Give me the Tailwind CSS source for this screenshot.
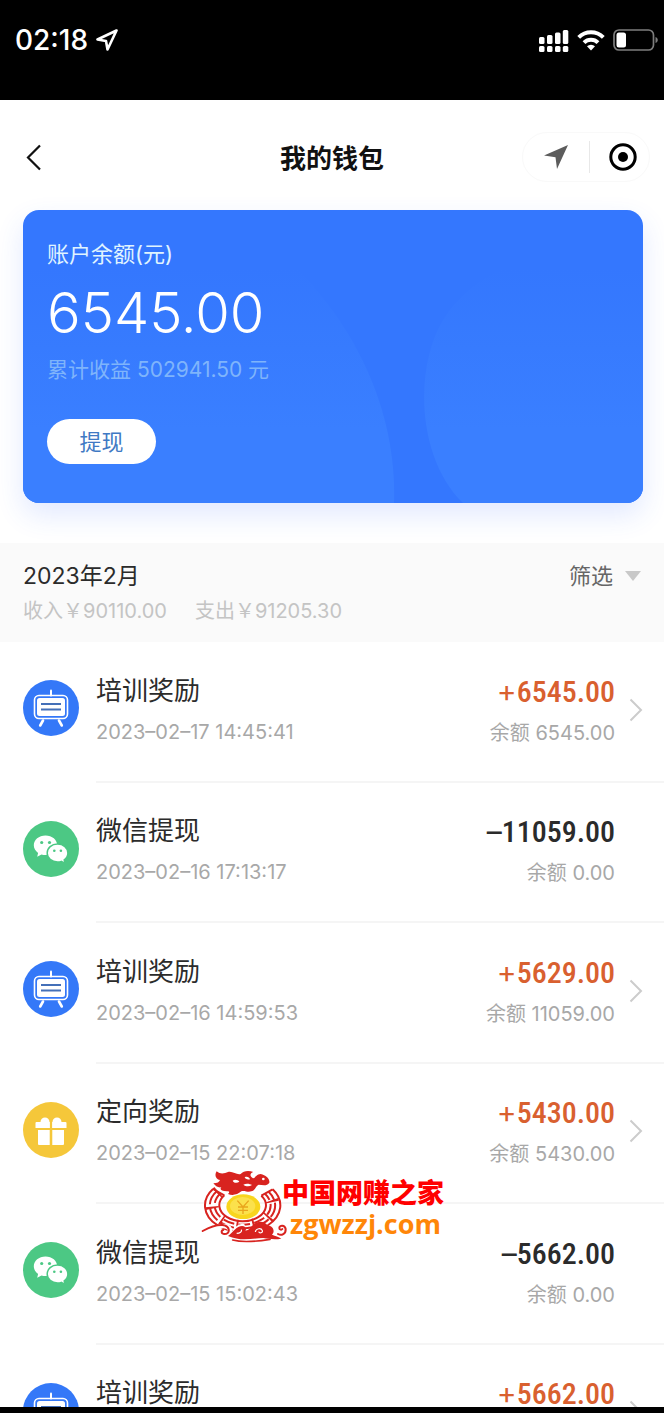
<!DOCTYPE html>
<html lang="zh-CN">
<head>
<meta charset="utf-8">
<meta name="viewport" content="width=device-width, initial-scale=1">
<title>我的钱包</title>
<script src="https://cdn.jsdelivr.net/npm/@tailwindcss/browser@4"></script>
</head>
<body class="bg-black">
<svg class="hidden" aria-hidden="true">
  <symbol id="board" viewBox="0 0 56 56">
    <circle cx="28" cy="28" r="28" fill="#3478f8"/>
    <g fill="none" stroke="#fff" stroke-linecap="round">
      <path d="M28 10.500v5" stroke-width="2"/>
      <rect x="11.500" y="15.500" width="33" height="23" rx="4.500" stroke-width="1.600"/>
      <path d="M20 40.500l-2.800 5M36 40.500l2.800 5" stroke-width="2.600"/>
    </g>
    <rect x="14" y="18" width="28" height="18" rx="2.500" fill="#fff"/>
    <path d="M18 24h20M18 29.500h20" stroke="#4470b8" stroke-width="1.800"/>
  </symbol>
  <symbol id="wechat" viewBox="0 0 56 56">
    <circle cx="28" cy="28" r="28" fill="#4cc884"/>
    <path d="M22.500 14.500c-6.600 0-11.700 4.400-11.700 9.800 0 3.100 1.700 5.800 4.300 7.600l-.9 3.900 4.300-2.300c1.300.4 2.600.6 4 .6 6.600 0 11.700-4.400 11.700-9.800s-5.100-9.800-11.700-9.800z" fill="#fff"/>
    <path d="M34.500 23c-5.900 0-10.300 4-10.300 9s4.400 9 10.300 9c1.400 0 2.700-.2 3.800-.6l3.600 1.900-.7-3.400c2.200-1.600 3.700-4 3.700-6.900 0-5-4.500-9-10.400-9z" fill="#fff" stroke="#4cc884" stroke-width="1.500"/>
    <g fill="#4cc884"><circle cx="18.700" cy="21.500" r="1.600"/><circle cx="26.500" cy="21.500" r="1.600"/><circle cx="31.300" cy="29.800" r="1.300"/><circle cx="37.900" cy="29.800" r="1.300"/></g>
  </symbol>
  <symbol id="gift" viewBox="0 0 56 56">
    <circle cx="28" cy="28" r="28" fill="#f5c73a"/>
    <path d="M13.500 20h29a1 1 0 0 1 1 1v5h-31v-5a1 1 0 0 1 1-1zM15 28h11.800v15H16a1 1 0 0 1-1-1zM29.200 28H41v14a1 1 0 0 1-1 1H29.200z" fill="#fff"/>
    <path d="M17.500 20a4.500 4.500 0 0 1 9 0zM29.500 20a4.500 4.500 0 0 1 9 0z" fill="#fff"/>
    <path d="M28 20v23" stroke="#f5c73a" stroke-width="2.200"/>
  </symbol>
  <symbol id="chev" viewBox="0 0 14 24"><path d="M1.500 1.500L12 12 1.500 22.500" fill="none" stroke="#ccc" stroke-width="2"/></symbol>
</svg>

<div class="relative flex h-screen flex-col overflow-hidden bg-white font-['Inter','Noto_Sans_CJK_SC',sans-serif] text-[#2b2b2b]">
  <div class="flex h-[100px] shrink-0 items-start justify-between bg-black pt-6 pr-[6px] pl-[15px] text-white">
    <div class="flex h-8 items-center gap-2">
      <span class="text-[28px] leading-8 font-medium">02:18</span>
      <svg class="h-[22px] w-[22px]" viewBox="0 0 22 22" fill="none" stroke="#fff" stroke-width="2.600" stroke-linejoin="round"><path d="M20.500 1.500L1.500 10.500l8.500 1.500 1.500 8.500z"/></svg>
    </div>
    <div class="flex h-8 items-center gap-2">
      <svg class="h-[23px] w-[30px]" viewBox="0 0 30 23" fill="#fff"><rect x="0" y="8" width="5.500" height="7" rx="1.500"/><rect x="8" y="6" width="5.500" height="9" rx="1.500"/><rect x="16" y="3.500" width="5.500" height="11.500" rx="1.500"/><rect x="23.800" y="1" width="5.500" height="14" rx="1.500"/><rect x="0" y="17" width="5.500" height="6" rx="1.500"/><rect x="8" y="17" width="5.500" height="6" rx="1.500"/><rect x="16" y="17" width="5.500" height="6" rx="1.500"/><rect x="23.800" y="17" width="5.500" height="6" rx="1.500"/></svg>
      <svg class="h-[22px] w-[28px]" viewBox="0 0 28 22" fill="none" stroke="#fff" stroke-width="4"><path d="M1.700 8.300a17.500 17.500 0 0 1 24.600 0M7 13.600a10 10 0 0 1 14 0"/><path d="M14 21.500l-4-4.200a5.800 5.800 0 0 1 8 0z" fill="#fff" stroke="none"/></svg>
      <svg class="h-[22px] w-[45px]" viewBox="0 0 45 22"><rect x="1" y="1" width="39.500" height="20" rx="5" fill="none" stroke="#7d7d7d" stroke-width="1.700"/><rect x="3.500" y="3.500" width="9.500" height="15" rx="2.500" fill="#fff"/><path d="M42.500 8c3 1 3 5 0 6z" fill="#7d7d7d"/></svg>
    </div>
  </div>

  <header class="grid h-[110px] shrink-0 grid-cols-[1fr_auto_1fr] items-center px-[14px] pt-1">
    <button class="flex h-10 w-10 items-center pl-3" aria-label="返回"><svg class="h-[27px] w-[15px]" viewBox="0 0 15 27" fill="none" stroke="#111" stroke-width="2.200"><path d="M14 1.500L2 13.500 14 25.500"/></svg></button>
    <h1 class="pt-1 text-[26px] leading-9 font-bold text-[#111]">我的钱包</h1>
    <div class="flex h-[50px] w-[128px] items-center justify-between justify-self-end rounded-full border border-[#f9f9f9] pr-3 pl-5">
      <button aria-label="位置"><svg class="h-[26px] w-[26px]" viewBox="0 0 26 26" fill="#5c5c5c"><path d="M25 1L1 11.500l11.500 1.800L14 25z"/></svg></button>
      <span class="h-8 w-px bg-[#e8e8e8]"></span>
      <button aria-label="关闭"><svg class="h-7 w-7" viewBox="0 0 28 28"><circle cx="14" cy="14" r="12.200" fill="none" stroke="#000" stroke-width="3"/><circle cx="14" cy="14" r="5" fill="#000"/></svg></button>
    </div>
  </header>

  <section class="relative mr-[21px] ml-[23px] h-[293px] shrink-0 rounded-[16px] bg-[#3477fe] shadow-[0_12px_28px_rgba(52,100,254,0.14)]">
    <svg class="absolute inset-0 h-full w-full rounded-[16px]" viewBox="0 0 620 293" preserveAspectRatio="none" aria-hidden="true">
      <defs><linearGradient id="fade" x1="0" y1="0" x2="0" y2="293" gradientUnits="userSpaceOnUse"><stop offset=".2" stop-color="#3a7fff" stop-opacity="0"/><stop offset=".75" stop-color="#3a7fff"/></linearGradient></defs>
      <path d="M0 0H200C300 60 375 170 371 293H0z" fill="url(#fade)"/>
      <path d="M440 293C395 250 390 160 420 110C450 60 520 30 620 40V293z" fill="url(#fade)"/>
    </svg>
    <div class="relative flex flex-col items-start pt-7 pl-6">
      <p class="text-[22px] leading-8 text-[#e0f4ff]">账户余额(元)</p>
      <p class="mt-2 text-[56px] leading-[70px] font-light text-white">6545.00</p>
      <p class="mt-[6px] text-[21px] leading-8 text-[#7fb4fb]">累计收益 502941.50 元</p>
      <button class="mt-[33px] h-[45px] w-[109px] rounded-full bg-white text-[22px] leading-8 text-[#3f79c4]">提现</button>
    </div>
  </section>

  <section class="mt-10 flex h-[99px] shrink-0 items-start justify-between bg-[#fafafa] pt-[17px] pr-[23px] pl-[23px]">
    <div>
      <h2 class="text-[23px] leading-8">2023年2月</h2>
      <p class="mt-[3px] flex gap-7 text-[20px] leading-8 text-[#c4c4c4]"><span>收入￥90110.00</span><span>支出￥91205.30</span></p>
    </div>
    <button class="flex items-center gap-3 text-[22px] leading-8 text-[#666]">筛选<svg class="h-[10px] w-4" viewBox="0 0 16 10" fill="#c8c8c8"><path d="M0 0h16L8 10z"/></svg></button>
  </section>

  <ul class="min-h-0 flex-1 overflow-hidden pt-px pl-[23px]">
    <li class="flex h-[140px] gap-[17px]">
      <svg class="mt-[37px] h-14 w-14 shrink-0"><use href="#board"/></svg>
      <div class="flex flex-1 justify-between border-b-2 border-[#f5f5f5] pt-[30px]">
        <div><p class="text-[26px] leading-9">培训奖励</p><p class="mt-[7px] text-[20px] leading-8 text-[#a8a8a8]">2023–02–17 14:45:41</p></div>
        <div class="relative pr-[49px] text-right"><p class="font-['Roboto_Condensed','Roboto',sans-serif] text-[30px] leading-9 font-medium text-[#d9602f]"><span class="font-['Inter',sans-serif] font-normal">+</span>6545.00</p><p class="mt-[7px] text-[20px] leading-8 text-[#a8a8a8]">余额 6545.00</p><svg class="absolute top-[25px] right-[21px] h-6 w-[14px]"><use href="#chev"/></svg></div>
      </div>
    </li>
    <li class="flex h-[140px] gap-[17px]">
      <svg class="mt-[38px] h-14 w-14 shrink-0"><use href="#wechat"/></svg>
      <div class="flex flex-1 justify-between border-b-2 border-[#f5f5f5] pt-[30px]">
        <div><p class="text-[26px] leading-9">微信提现</p><p class="mt-[7px] text-[20px] leading-8 text-[#a8a8a8]">2023–02–16 17:13:17</p></div>
        <div class="pr-[49px] text-right"><p class="font-['Roboto_Condensed','Roboto',sans-serif] text-[30px] leading-9 font-medium"><span class="font-['Inter',sans-serif] font-normal">–</span>11059.00</p><p class="mt-[7px] text-[20px] leading-8 text-[#a8a8a8]">余额 0.00</p></div>
      </div>
    </li>
    <li class="flex h-[141px] gap-[17px]">
      <svg class="mt-[38px] h-14 w-14 shrink-0"><use href="#board"/></svg>
      <div class="flex flex-1 justify-between border-b-2 border-[#f5f5f5] pt-[31px]">
        <div><p class="text-[26px] leading-9">培训奖励</p><p class="mt-[7px] text-[20px] leading-8 text-[#a8a8a8]">2023–02–16 14:59:53</p></div>
        <div class="relative pr-[49px] text-right"><p class="font-['Roboto_Condensed','Roboto',sans-serif] text-[30px] leading-9 font-medium text-[#d9602f]"><span class="font-['Inter',sans-serif] font-normal">+</span>5629.00</p><p class="mt-[7px] text-[20px] leading-8 text-[#a8a8a8]">余额 11059.00</p><svg class="absolute top-[25px] right-[21px] h-6 w-[14px]"><use href="#chev"/></svg></div>
      </div>
    </li>
    <li class="flex h-[140px] gap-[17px]">
      <svg class="mt-[38px] h-14 w-14 shrink-0"><use href="#gift"/></svg>
      <div class="flex flex-1 justify-between border-b-2 border-[#f5f5f5] pt-[30px]">
        <div><p class="text-[26px] leading-9">定向奖励</p><p class="mt-[7px] text-[20px] leading-8 text-[#a8a8a8]">2023–02–15 22:07:18</p></div>
        <div class="relative pr-[49px] text-right"><p class="font-['Roboto_Condensed','Roboto',sans-serif] text-[30px] leading-9 font-medium text-[#d9602f]"><span class="font-['Inter',sans-serif] font-normal">+</span>5430.00</p><p class="mt-[7px] text-[20px] leading-8 text-[#a8a8a8]">余额 5430.00</p><svg class="absolute top-[25px] right-[21px] h-6 w-[14px]"><use href="#chev"/></svg></div>
      </div>
    </li>
    <li class="flex h-[141px] gap-[17px]">
      <svg class="mt-[38px] h-14 w-14 shrink-0"><use href="#wechat"/></svg>
      <div class="flex flex-1 justify-between border-b-2 border-[#f5f5f5] pt-[31px]">
        <div><p class="text-[26px] leading-9">微信提现</p><p class="mt-[7px] text-[20px] leading-8 text-[#a8a8a8]">2023–02–15 15:02:43</p></div>
        <div class="pr-[49px] text-right"><p class="font-['Roboto_Condensed','Roboto',sans-serif] text-[30px] leading-9 font-medium"><span class="font-['Inter',sans-serif] font-normal">–</span>5662.00</p><p class="mt-[7px] text-[20px] leading-8 text-[#a8a8a8]">余额 0.00</p></div>
      </div>
    </li>
    <li class="flex h-[140px] gap-[17px]">
      <svg class="mt-[38px] h-14 w-14 shrink-0"><use href="#board"/></svg>
      <div class="flex flex-1 justify-between pt-[30px]">
        <p class="text-[26px] leading-9">培训奖励</p>
        <div class="relative pr-[49px] text-right"><p class="font-['Roboto_Condensed','Roboto',sans-serif] text-[30px] leading-9 font-medium text-[#d9602f]"><span class="font-['Inter',sans-serif] font-normal">+</span>5662.00</p><svg class="absolute top-[25px] right-[21px] h-6 w-[14px]"><use href="#chev"/></svg></div>
      </div>
    </li>
  </ul>
  <div class="h-[6px] shrink-0 bg-black"></div>

  <div class="pointer-events-none absolute top-[1168px] left-[200px] flex">
    <svg class="h-[76px] w-[92px] shrink-0" viewBox="0 0 276 228" aria-hidden="true">
      <path d="M56 72A91 64 0 1 0 200 74" fill="none" stroke="#fff" stroke-width="46"/>
      <g fill="none" stroke="#d8231f" stroke-width="6">
        <path d="M39 63A113 80 0 1 0 218 64M73 82A70 48 0 1 0 184 83"/>
        <path d="M51 69A98 69 0 1 0 206 71" stroke-dasharray="46 9"/>
        <path d="M62 76A84 58 0 1 0 195 77" stroke-dasharray="34 13"/>
        <path d="M39 63L73 82M218 64L184 83"/>
        <path d="M56 72A91 64 0 1 0 200 74" stroke-width="40" stroke-dasharray="6 44"/>
      </g>
      <ellipse cx="130" cy="116" rx="51" ry="37" fill="#f8d51e"/>
      <ellipse cx="128" cy="114" rx="38" ry="27" fill="#fbe14c"/>
      <path d="M112 98l17 19 17-19M129 117v21M114 117h30M114 127h30" fill="none" stroke="#e9a51c" stroke-width="4"/>
      <path d="M50 10C62 20 74 16 84 12C98 8 110 22 122 18C130 8 146 6 160 12C150 16 148 24 158 30C164 34 168 18 182 18C198 22 210 32 208 44C200 56 186 50 176 50C166 54 168 66 154 70C142 74 134 66 124 70C112 80 98 84 84 78C90 74 88 68 80 70C64 70 58 64 64 58C54 60 46 54 40 46C52 46 58 42 60 36C48 34 42 22 50 10z" fill="#d8231f"/>
      <path d="M98 38c7-5 16-2 20 3c-6 5-16 5-20-3zM134 28c8-4 14 1 16 6c-8 2-14-1-16-6zM130 50c10-5 20-2 26 1c-8 5-18 5-26-1z" fill="#fff"/>
      <circle cx="190" cy="33" r="4" fill="#fff"/>
      <g fill="none" stroke="#fff" stroke-width="14" stroke-linecap="round"><path d="M58 176c14-4 32-2 32 12M96 204C104 188 114 174 128 174"/></g>
      <path d="M84 204C100 192 110 174 126 174C138 174 140 184 136 188C144 188 150 182 158 172C170 158 194 158 202 172C220 174 226 190 216 200C226 204 236 206 244 212C222 216 204 212 190 210C160 210 124 222 84 204z" fill="#d8231f"/>
      <path d="M110 196c10 0 16-5 14-11M166 192c2-12 18-13 21-4c2 7-9 9-11 3" fill="none" stroke="#fff" stroke-width="3.500"/>
      <g fill="none" stroke="#d8231f" stroke-linecap="round"><path d="M8 189c18-10 40-20 60-18c24 4 24 28 4 27c-9-1-9-11-2-12" stroke-width="6"/><path d="M98 216c30 8 74 4 112-2" stroke-width="5"/><path d="M234 198c10 6 24 0 23-15c-2-13-19-12-19-3c0 6 7 6 9 3" stroke-width="6"/></g>
    </svg>
    <div class="-ml-[10px] pt-[10px]">
      <p class="text-[27px] leading-8 font-black text-[#f00]">中国网赚之家</p>
      <p class="pl-2 font-['Open_Sans',sans-serif] text-[27px] leading-7 font-bold text-[#ff8608]">zgwzzj.com</p>
    </div>
  </div>
</div>
</body>
</html>
